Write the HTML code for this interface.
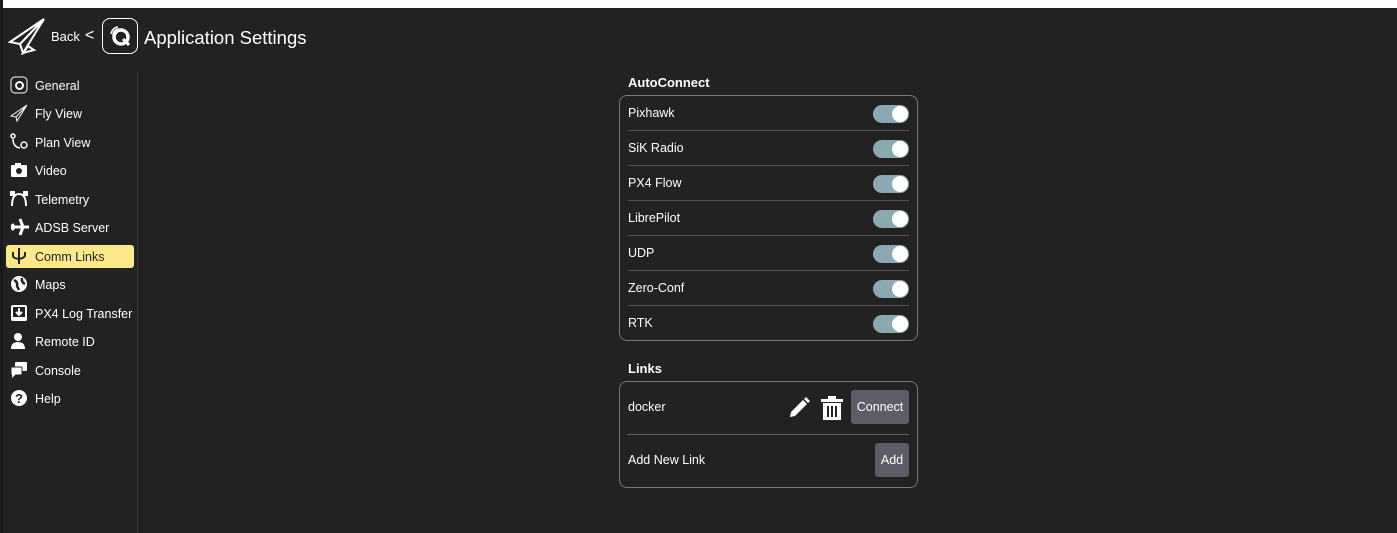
<!DOCTYPE html>
<html><head><style>
*{margin:0;padding:0;box-sizing:border-box}
body{width:1397px;height:533px;background:#222222;font-family:"Liberation Sans",sans-serif;color:#fff;position:relative;overflow:hidden}
.top{position:absolute;left:0;top:0;width:1397px;height:8px;background:#fff}
.ls{position:absolute;left:0;top:0;width:3px;height:533px;background:#1a1a1a}
.abs{position:absolute}
.side{position:absolute;left:137px;top:72px;width:1px;height:461px;background:#3a3a3a}
.item{position:absolute;left:6px;width:128px;height:23px;font-size:12.5px;line-height:25px;padding-left:29px}
.item svg{position:absolute;left:4px;top:2px}
.sel{background:#fde98a;color:#222;border-radius:3px}
.panel{position:absolute;left:619px;width:299px;border:1px solid #777;border-radius:8px}
.row{position:relative;height:35px;margin:0 8px;font-size:12.5px;line-height:35px;border-bottom:1px solid #555}
.row:last-child{border-bottom:none}
.tg{position:absolute;right:0;top:9px;width:36px;height:18px;border-radius:9px;background:#8aa9b3}
.tg:after{content:"";position:absolute;right:1px;top:1px;width:16px;height:16px;border-radius:50%;background:#fff}
.h{position:absolute;left:628px;font-weight:bold;font-size:13px}
.btn{position:absolute;background:#5f5b68;border-radius:3px;font-size:12.5px;text-align:center;color:#fff}
</style></head><body>
<div class="top"></div><div class="ls"></div>
<svg class="abs" style="left:8px;top:17px" width="38" height="38" viewBox="0 0 38 38" fill="none" stroke="#fff" stroke-width="2"><path d="M36 2 L2 25 L12 27 L15 36 L36 2 Z M12 27 L36 2 M15 36 L20 29 L26 33 Z"/></svg>
<div class="abs" style="left:51px;top:29px;font-size:13px">Back</div>
<div class="abs" style="left:85px;top:27px;font-size:16px">&lt;</div>
<div class="abs" style="left:102px;top:18px;width:36px;height:36px;border:1.5px solid #fff;border-radius:8px"></div>
<svg class="abs" style="left:108px;top:24px" width="24" height="24" viewBox="0 0 24 24"><circle cx="13" cy="13" r="7" fill="none" stroke="#fff" stroke-width="3.5"/><path d="M15 15 L21 21" stroke="#fff" stroke-width="3"/><path d="M3 10 A8 8 0 0 1 10 3 M5 11 A6 6 0 0 1 11 5" stroke="#fff" stroke-width="1.5" fill="none"/></svg>
<div class="abs" style="left:144px;top:27px;font-size:18.5px">Application Settings</div>
<div class="side"></div>

<div class="item" style="top:74px"><svg width="18" height="18"><rect x="1" y="1" width="16" height="16" rx="4" fill="none" stroke="#fff"/><circle cx="9.5" cy="9.5" r="3.5" fill="none" stroke="#fff" stroke-width="2"/></svg>General</div>
<div class="item" style="top:102px"><svg width="18" height="18" fill="none" stroke="#fff"><path d="M17 1 L1 12 L6 13 L7 17 Z M6 13 L17 1"/></svg>Fly View</div>
<div class="item" style="top:131px"><svg width="18" height="18" fill="none" stroke="#fff" stroke-width="1.5"><circle cx="3" cy="3" r="2"/><circle cx="14" cy="12" r="3"/><path d="M3 6 Q3 14 10 15"/></svg>Plan View</div>
<div class="item" style="top:159px"><svg width="18" height="18"><rect x="1" y="4" width="16" height="12" rx="1" fill="#fff"/><rect x="5" y="2" width="6" height="3" fill="#fff"/><circle cx="9" cy="10" r="3" fill="#222"/></svg>Video</div>
<div class="item" style="top:188px"><svg width="18" height="18" fill="none" stroke="#fff" stroke-width="2"><path d="M2 16 Q2 4 9 4 Q16 4 16 16"/><rect x="1" y="2" width="3" height="3" fill="#fff"/><rect x="14" y="2" width="3" height="3" fill="#fff"/></svg>Telemetry</div>
<div class="item" style="top:216px"><svg width="20" height="18"><path d="M1 9 L19 9 M10 1 L13 9 L10 17 M2 6 L4 9 L2 12" stroke="#fff" stroke-width="3" fill="none"/></svg>ADSB Server</div>
<div class="item sel" style="top:245px"><svg width="18" height="18" fill="none" stroke="#222" stroke-width="2"><path d="M9 1 V17 M3 5 V9 Q3 11 9 12 Q15 11 15 8 V5"/></svg>Comm Links</div>
<div class="item" style="top:273px"><svg width="18" height="18"><circle cx="9" cy="9" r="8" fill="#fff"/><path d="M4 5 Q8 7 7 11 L9 15 M12 3 Q11 7 15 9" stroke="#222" stroke-width="2.5" fill="none"/></svg>Maps</div>
<div class="item" style="top:302px"><svg width="18" height="18"><rect x="1" y="1" width="16" height="16" rx="2" fill="#fff"/><rect x="3" y="3" width="12" height="10" fill="#222"/><path d="M9 4 V10 M6 8 L9 11 L12 8" stroke="#fff" stroke-width="2" fill="none"/></svg>PX4 Log Transfer</div>
<div class="item" style="top:330px"><svg width="18" height="18" fill="#fff"><circle cx="8" cy="5" r="4"/><path d="M1 17 Q1 10 8 10 Q15 10 15 17 Z"/></svg>Remote ID</div>
<div class="item" style="top:359px"><svg width="18" height="18" fill="#fff"><rect x="5" y="1" width="12" height="9" rx="1"/><rect x="1" y="6" width="11" height="8" rx="1" stroke="#222"/><path d="M2 13 L2 17 L6 13 Z"/></svg>Console</div>
<div class="item" style="top:387px"><svg width="18" height="18"><circle cx="9" cy="9" r="8" fill="#fff"/><text x="9" y="14" font-size="13" font-weight="bold" fill="#222" text-anchor="middle" font-family="Liberation Sans">?</text></svg>Help</div>

<div class="h" style="top:75px">AutoConnect</div>
<div class="panel" style="top:95px;height:246px">
<div class="row">Pixhawk<div class="tg"></div></div>
<div class="row">SiK Radio<div class="tg"></div></div>
<div class="row">PX4 Flow<div class="tg"></div></div>
<div class="row">LibrePilot<div class="tg"></div></div>
<div class="row">UDP<div class="tg"></div></div>
<div class="row">Zero-Conf<div class="tg"></div></div>
<div class="row">RTK<div class="tg"></div></div>
</div>
<div class="h" style="top:361px">Links</div>
<div class="panel" style="top:381px;height:107px"></div>
<div class="abs" style="left:628px;top:400px;font-size:12.5px">docker</div>
<div class="abs" style="left:627px;top:434px;width:282px;height:1px;background:#666"></div>
<div class="abs" style="left:628px;top:453px;font-size:12.5px">Add New Link</div>
<svg class="abs" style="left:787px;top:396px" width="24" height="24"><path d="M3 21 L4 16 L16 4 L20 8 L8 20 Z" fill="#fff"/><path d="M17 3 L19 1 L23 5 L21 7 Z" fill="#fff"/></svg>
<svg class="abs" style="left:820px;top:395px" width="24" height="26" fill="#fff"><rect x="1" y="4" width="22" height="3"/><rect x="8" y="1" width="8" height="3"/><path d="M3 8 H21 V25 H3 Z M7 11 V22 H9 V11 Z M11 11 V22 H13 V11 Z M15 11 V22 H17 V11 Z" fill-rule="evenodd"/></svg>
<div class="btn" style="left:851px;top:390px;width:58px;height:34px;line-height:35px">Connect</div>
<div class="btn" style="left:875px;top:443px;width:34px;height:34px;line-height:35px">Add</div>
</body></html>
